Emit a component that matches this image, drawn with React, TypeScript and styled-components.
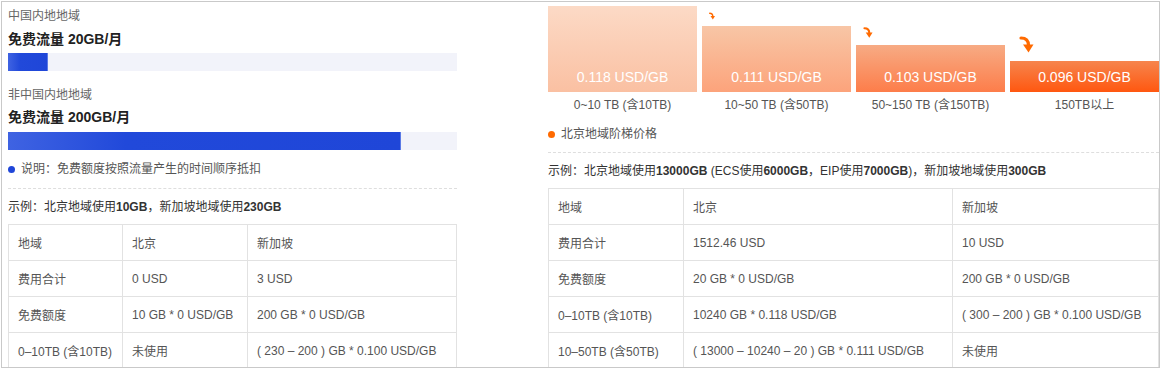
import React from "react";
import styled, {createGlobalStyle} from "styled-components";

const GlobalStyle = createGlobalStyle`
  html, body {
    margin: 0;
    padding: 0;
    background: #ffffff;
  }
  body {
    font-family: "Liberation Sans", "Noto Sans CJK SC", sans-serif;
    color: #333;
  }
`;

// 바깥 테두리 (스크린샷 프레임)
const Frame = styled.div`
  margin: 1px 0 0 1px;
  width: 1159px;
  height: 367px;
  box-sizing: border-box;
  border: 1px solid #c9c9c9;
  overflow: hidden;
  display: flex;
  gap: 91px;
  padding-left: 6px;
`;

const LeftCol = styled.div`
  width: 449px;
  flex: none;
  padding-top: 5px;
`;

const RightCol = styled.div`
  width: 611px;
  flex: none;
  padding-top: 4px;
`;

const RegionLabel = styled.div<{ $mt?: number }>`
  font-size: 12px;
  line-height: 18px;
  color: #666;
  margin-top: ${(p) => p.$mt ?? 0}px;
`;

const Quota = styled.div<{ $mt: number }>`
  font-size: 14px;
  line-height: 20px;
  font-weight: bold;
  color: #222;
  margin-top: ${(p) => p.$mt}px;
`;

const Track = styled.div<{ $mt: number }>`
  height: 18px;
  background: #f2f3fa;
  margin-top: ${(p) => p.$mt}px;
`;

const Fill = styled.div`
  height: 100%;
  background: linear-gradient(90deg, #3f63e2 0%, #2149da 30%, #1f46d8 100%);
  box-shadow: inset -1px 0 0 #5b7ae6;
`;

const Note = styled.div<{ $color: string; $mt: number }>`
  display: flex;
  align-items: center;
  gap: 6px;
  font-size: 12px;
  line-height: 18px;
  color: #555;
  margin-top: ${(p) => p.$mt}px;
  &::before {
    content: "";
    width: 7px;
    height: 7px;
    border-radius: 50%;
    background: ${(p) => p.$color};
    margin-left: 0;
  }
`;

const Dashed = styled.div<{ $mt: number }>`
  margin-top: ${(p) => p.$mt}px;
  border-top: 1px dashed #dedede;
`;

const Example = styled.div`
  margin-top: 9px;
  font-size: 12px;
  line-height: 18px;
  color: #333;
  white-space: nowrap;
  b {
    font-weight: bold;
  }
`;

const Table = styled.table`
  margin-top: 8px;
  width: 100%;
  border-collapse: collapse;
  table-layout: fixed;
  td {
    height: 35px;
    padding: 0 9px;
    border: 1px solid #e2e2e2;
    font-size: 12px;
    color: #555;
    white-space: nowrap;
    overflow: hidden;
  }
`;

const Chart = styled.div`
  display: flex;
  gap: 5px;
  height: 86px;
`;

const Step = styled.div`
  width: 149px;
  display: flex;
  flex-direction: column;
  justify-content: flex-end;
`;

const Bar = styled.div<{ $h: number; $from: string; $to: string }>`
  height: ${(p) => p.$h}px;
  background: linear-gradient(180deg, ${(p) => p.$from}, ${(p) => p.$to});
  display: flex;
  align-items: flex-end;
  justify-content: center;
  padding-bottom: 5px;
  box-sizing: border-box;
  color: #fff;
  font-size: 14px;
  line-height: 20px;
`;

const ArrowWrap = styled.div<{ $ml: number; $mb: number }>`
  margin-left: ${(p) => p.$ml}px;
  margin-bottom: ${(p) => p.$mb}px;
  line-height: 0;
`;

const Labels = styled.div`
  display: flex;
  gap: 5px;
  margin-top: 4px;
`;

const StepLabel = styled.div`
  width: 149px;
  text-align: center;
  font-size: 12px;
  line-height: 18px;
  color: #555;
`;

function Arrow({w, h}: { w: number; h: number }) {
  return (
    <svg width={w} height={h} viewBox="0 0 14 17">
      <path d="M1.5 2 C6.5 2 9 4.5 9 9.5" fill="none" stroke="#ff6a00" strokeWidth="3.2" strokeLinecap="round"/>
      <polygon points="3.5,8.5 14,8.5 9,16.5" fill="#ff6a00"/>
    </svg>
  );
}

const steps = [
  {price: "0.118 USD/GB", label: "0~10 TB (含10TB)", h: 86, from: "#fcdac6", to: "#fac0a2"},
  {price: "0.111 USD/GB", label: "10~50 TB (含50TB)", h: 66, from: "#f8c6a6", to: "#fca37b", arrow: {w: 6, h: 8, ml: 7, mb: 6}},
  {price: "0.103 USD/GB", label: "50~150 TB (含150TB)", h: 47, from: "#f7ab84", to: "#fd7d4a", arrow: {w: 10, h: 11, ml: 7, mb: 7}},
  {price: "0.096 USD/GB", label: "150TB以上", h: 31, from: "#f6854d", to: "#ff5710", arrow: {w: 15, h: 17, ml: 9, mb: 8}},
];

const leftRows = [
  ["地域", "北京", "新加坡"],
  ["费用合计", "0 USD", "3 USD"],
  ["免费额度", "10 GB * 0 USD/GB", "200 GB * 0 USD/GB"],
  ["0–10TB (含10TB)", "未使用", "( 230 – 200 ) GB * 0.100 USD/GB"],
];

const rightRows = [
  ["地域", "北京", "新加坡"],
  ["费用合计", "1512.46 USD", "10 USD"],
  ["免费额度", "20 GB * 0 USD/GB", "200 GB * 0 USD/GB"],
  ["0–10TB (含10TB)", "10240 GB * 0.118 USD/GB", "( 300 – 200 ) GB * 0.100 USD/GB"],
  ["10–50TB (含50TB)", "( 13000 – 10240 – 20 ) GB * 0.111 USD/GB", "未使用"],
];

function App() {
  return (
    <>
      <GlobalStyle/>
      <Frame>
        <LeftCol>
          <RegionLabel>中国内地地域</RegionLabel>
          <Quota $mt={4}>免费流量 20GB/月</Quota>
          <Track $mt={4}><Fill style={{width: `${(20 / 225) * 100}%`}}/></Track>
          <RegionLabel $mt={15}>非中国内地地域</RegionLabel>
          <Quota $mt={3}>免费流量 200GB/月</Quota>
          <Track $mt={5}><Fill style={{width: `${(200 / 228.5) * 100}%`}}/></Track>
          <Note $color="#1f46d8" $mt={10}>说明：免费额度按照流量产生的时间顺序抵扣</Note>
          <Dashed $mt={10}/>
          <Example>示例：北京地域使用<b>10GB</b>，新加坡地域使用<b>230GB</b></Example>
          <Table>
            <colgroup>
              <col style={{width: 114}}/>
              <col style={{width: 125}}/>
              <col/>
            </colgroup>
            <tbody>
            {leftRows.map((r) => (
              <tr key={r[0]}>
                {r.map((c, i) => <td key={i}>{c}</td>)}
              </tr>
            ))}
            </tbody>
          </Table>
        </LeftCol>
        <RightCol>
          <Chart>
            {steps.map((s) => (
              <Step key={s.price}>
                {s.arrow && (
                  <ArrowWrap $ml={s.arrow.ml} $mb={s.arrow.mb}>
                    <Arrow w={s.arrow.w} h={s.arrow.h}/>
                  </ArrowWrap>
                )}
                <Bar $h={s.h} $from={s.from} $to={s.to}>{s.price}</Bar>
              </Step>
            ))}
          </Chart>
          <Labels>
            {steps.map((s) => <StepLabel key={s.label}>{s.label}</StepLabel>)}
          </Labels>
          <Note $color="#ff6a00" $mt={11}>北京地域阶梯价格</Note>
          <Dashed $mt={9}/>
          <Example>
            示例：北京地域使用<b>13000GB</b> (ECS使用<b>6000GB</b>，EIP使用<b>7000GB</b>)，新加坡地域使用<b>300GB</b>
          </Example>
          <Table>
            <colgroup>
              <col style={{width: 135}}/>
              <col style={{width: 269}}/>
              <col/>
            </colgroup>
            <tbody>
            {rightRows.map((r) => (
              <tr key={r[0]}>
                {r.map((c, i) => <td key={i}>{c}</td>)}
              </tr>
            ))}
            </tbody>
          </Table>
        </RightCol>
      </Frame>
    </>
  );
}

export default App;
